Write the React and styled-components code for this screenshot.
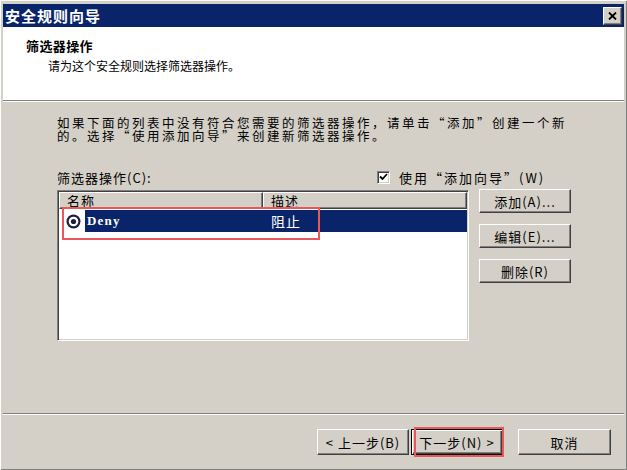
import React from 'react';
import styled, { createGlobalStyle } from 'styled-components';

const GlobalStyle = createGlobalStyle`
  html, body { margin: 0; padding: 0; background: #d4d0c8; }
  body {
    font-family: "Noto Sans CJK SC", "Noto Sans", sans-serif;
    font-size: 13px;
    color: #000;
  }
`;

const Frame = styled.div`
  width: 627px;
  height: 470px;
  box-sizing: border-box;
  padding: 4px 3px 3px 3px;
  background: #d4d0c8;
  display: flex;
  flex-direction: column;
  box-shadow: inset 1px 1px 0 #fff, inset -1px -1px 0 #808080;
`;

const TitleBar = styled.div`
  height: 23px;
  flex: 0 0 23px;
  background: #0a246a;
  display: flex;
  align-items: center;
  justify-content: space-between;
  padding: 0 2px 0 2px;
`;

const TitleText = styled.span`
  color: #fff;
  font-weight: bold;
  font-size: 15px;
  letter-spacing: 1px;
`;

const CloseBox = styled.div`
  width: 19px;
  height: 18px;
  box-sizing: border-box;
  background: #d4d0c8;
  border: 1px solid;
  border-color: #fff #404040 #404040 #fff;
  box-shadow: inset -1px -1px 0 #808080;
  display: flex;
  align-items: center;
  justify-content: center;
`;

const Header = styled.div`
  height: 73px;
  flex: 0 0 73px;
  background: #fff;
  box-sizing: border-box;
  padding: 11px 0 0 23px;
`;

const HeaderTitle = styled.div`
  font-weight: bold;
  font-size: 13px;
  line-height: 16px;
  letter-spacing: 0.4px;
`;

const HeaderSub = styled.div`
  font-size: 12px;
  line-height: 16px;
  margin: 4px 0 0 22px;
`;

const Rule = styled.div`
  height: 0;
  border-top: 1px solid #808080;
  border-bottom: 1px solid #fff;
`;

const Body = styled.div`
  flex: 1;
  box-sizing: border-box;
  padding: 14px 0 0 54px;
  display: flex;
  flex-direction: column;
`;

const Paragraph = styled.div`
  font-size: 12.5px;
  line-height: 13px;
  letter-spacing: 2.5px;
  white-space: nowrap;
`;

const LabelRow = styled.div`
  margin-top: 24px;
  height: 22px;
  display: flex;
  align-items: center;
`;

const FieldLabel = styled.span`
  flex: 0 0 320px;
  letter-spacing: 1px;
`;

const CheckGroup = styled.label`
  display: flex;
  align-items: center;
  gap: 9px;
  letter-spacing: 2px;
`;

const CheckBox = styled.span`
  width: 13px;
  height: 13px;
  box-sizing: border-box;
  background: #fff;
  border: 1px solid;
  border-color: #808080 #fff #fff #808080;
  box-shadow: inset 1px 1px 0 #404040, inset -1px -1px 0 #d4d0c8;
  display: flex;
  align-items: center;
  justify-content: center;
`;

const MainRow = styled.div`
  margin-top: 2px;
  display: flex;
  gap: 10px;
`;

const ListBox = styled.div`
  position: relative;
  width: 412px;
  height: 151px;
  box-sizing: border-box;
  background: #fff;
  border: 1px solid;
  border-color: #808080 #fff #fff #808080;
  box-shadow: inset 1px 1px 0 #404040, inset -1px -1px 0 #d4d0c8;
  padding: 1px;
`;

const HeadRow = styled.div`
  display: flex;
  height: 17px;
`;

const HeadCell = styled.div`
  width: ${(p) => p.$w}px;
  flex: ${(p) => (p.$w ? 'none' : '1')};
  box-sizing: border-box;
  background: #d4d0c8;
  border: 1px solid;
  border-color: #fff #404040 #404040 #fff;
  box-shadow: inset -1px -1px 0 #808080;
  padding-left: 7px;
  font-size: 13px;
  line-height: 15px;
  letter-spacing: 1px;
`;

const ItemRow = styled.div`
  display: flex;
  height: 22px;
  margin-top: 1px;
`;

const IconSlot = styled.div`
  width: 26px;
  box-sizing: border-box;
  padding-left: 7px;
  display: flex;
  align-items: center;
`;

const Cell = styled.div`
  width: ${(p) => p.$w}px;
  flex: ${(p) => (p.$w ? 'none' : '1')};
  background: #0a246a;
  color: #fff;
  display: flex;
  align-items: center;
  box-sizing: border-box;
  padding-left: ${(p) => p.$pad}px;
  font-size: 14px;
  letter-spacing: 1px;
`;

const LatinName = styled.span`
  font-family: "Liberation Serif", "DejaVu Serif", serif;
  font-weight: bold;
  font-size: 13px;
  letter-spacing: 1.2px;
`;

const Mark = styled.div`
  position: absolute;
  left: ${(p) => p.$l}px;
  top: ${(p) => p.$t}px;
  width: ${(p) => p.$w}px;
  height: ${(p) => p.$h}px;
  box-sizing: border-box;
  border: 2px solid #e8585a;
  pointer-events: none;
`;

const SideButtons = styled.div`
  display: flex;
  flex-direction: column;
  gap: 11px;
  margin-top: -1px;
`;

const WinButton = styled.div`
  position: relative;
  width: ${(p) => p.$w || 92}px;
  height: ${(p) => p.$h || 24}px;
  box-sizing: border-box;
  background: #d4d0c8;
  border: 1px solid;
  border-color: ${(p) => (p.$default ? '#000' : '#fff #404040 #404040 #fff')};
  box-shadow: ${(p) =>
    p.$default
      ? 'inset 1px 1px 0 #fff, inset -1px -1px 0 #404040, inset -2px -2px 0 #808080'
      : 'inset -1px -1px 0 #808080'};
  display: flex;
  align-items: center;
  justify-content: center;
  font-size: 13px;
  letter-spacing: 1px;
  white-space: nowrap;
`;

const Footer = styled.div`
  flex: 0 0 52px;
  box-sizing: border-box;
  padding: 14px 13px 0 0;
  display: flex;
  justify-content: flex-end;
`;

const NavPair = styled.div`
  display: flex;
  gap: 2px;
  margin-right: 15px;
`;

const RadioIcon = () => (
  <svg width="15" height="15" viewBox="0 0 15 15">
    <circle cx="7.5" cy="7.5" r="7" fill="#1b1f3f" />
    <circle cx="7.5" cy="7.5" r="4.8" fill="#fff" />
    <circle cx="7.5" cy="7.5" r="2.6" fill="#1b1f3f" />
  </svg>
);

const CloseIcon = () => (
  <svg width="9" height="8" viewBox="0 0 9 8">
    <path d="M1 0.5 L8 7.5 M8 0.5 L1 7.5" stroke="#000" strokeWidth="1.8" />
  </svg>
);

const CheckIcon = () => (
  <svg width="9" height="8" viewBox="0 0 9 8">
    <path d="M1 3.5 L3.5 6 L8 1" stroke="#000" strokeWidth="1.8" fill="none" />
  </svg>
);

export default function App() {
  return (
    <>
      <GlobalStyle />
      <Frame>
        <TitleBar>
          <TitleText>安全规则向导</TitleText>
          <CloseBox>
            <CloseIcon />
          </CloseBox>
        </TitleBar>
        <Header>
          <HeaderTitle>筛选器操作</HeaderTitle>
          <HeaderSub>请为这个安全规则选择筛选器操作。</HeaderSub>
        </Header>
        <Rule />
        <Body>
          <Paragraph>
            如果下面的列表中没有符合您需要的筛选器操作，请单击“添加”创建一个新
            <br />
            的。选择“使用添加向导”来创建新筛选器操作。
          </Paragraph>
          <LabelRow>
            <FieldLabel>筛选器操作(C):</FieldLabel>
            <CheckGroup>
              <CheckBox>
                <CheckIcon />
              </CheckBox>
              使用“添加向导”(W)
            </CheckGroup>
          </LabelRow>
          <MainRow>
            <ListBox>
              <HeadRow>
                <HeadCell $w={204}>名称</HeadCell>
                <HeadCell>描述</HeadCell>
              </HeadRow>
              <ItemRow>
                <IconSlot>
                  <RadioIcon />
                </IconSlot>
                <Cell $w={178} $pad={2}>
                  <LatinName>Deny</LatinName>
                </Cell>
                <Cell $pad={8}>阻止</Cell>
              </ItemRow>
              <Mark $l={4} $t={16} $w={258} $h={33} />
            </ListBox>
            <SideButtons>
              <WinButton>添加(A)...</WinButton>
              <WinButton>编辑(E)...</WinButton>
              <WinButton>删除(R)</WinButton>
            </SideButtons>
          </MainRow>
        </Body>
        <Rule />
        <Footer>
          <NavPair>
            <WinButton $h={26}>&lt; 上一步(B)</WinButton>
            <WinButton $h={26} $default>
              下一步(N) &gt;
              <Mark $l={2} $t={-3} $w={90} $h={30} />
            </WinButton>
          </NavPair>
          <WinButton $h={26} $w={93}>取消</WinButton>
        </Footer>
      </Frame>
    </>
  );
}
